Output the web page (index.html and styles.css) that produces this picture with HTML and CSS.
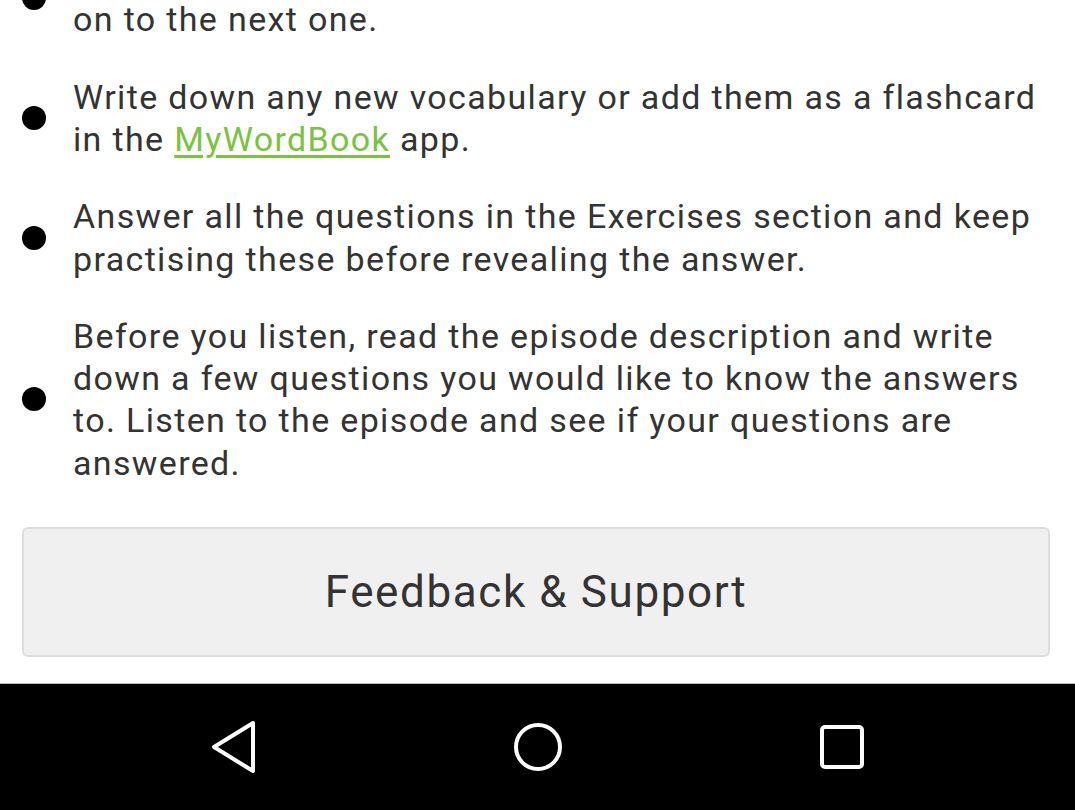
FILE: index.html
```html
<!DOCTYPE html>
<html lang="en">
<head>
<meta charset="utf-8">
<title>Tips</title>
<link rel="stylesheet" href="styles.css">
</head>
<body>
<div class="screen">
  <main class="content">
    <ul class="tips">
      <li class="tip"><span class="dot"></span><p>Listen to each episode three or four times before you move on to the next one.</p></li>
      <li class="tip"><span class="dot"></span><p>Write down any new vocabulary or add them as a flashcard in the <a class="link" href="#">MyWordBook</a> app.</p></li>
      <li class="tip"><span class="dot"></span><p>Answer all the questions in the Exercises section and keep practising these before revealing the answer.</p></li>
      <li class="tip"><span class="dot"></span><p>Before you listen, read the episode description and write down a few questions you would like to know the answers to. Listen to the episode and see if your questions are answered.</p></li>
    </ul>
    <button class="feedback">Feedback &amp; Support</button>
  </main>
  <nav class="navbar">
    <svg class="nav-icon" width="60" height="60" viewBox="0 0 60 60"><path d="M49 6 L10 30 L49 54 Z" fill="none" stroke="#fff" stroke-width="4" stroke-linejoin="round"/></svg>
    <svg class="nav-icon" width="60" height="60" viewBox="0 0 60 60"><circle cx="30" cy="30" r="22" fill="none" stroke="#fff" stroke-width="4"/></svg>
    <svg class="nav-icon" width="60" height="60" viewBox="0 0 60 60"><rect x="10" y="10" width="40" height="40" rx="3" fill="none" stroke="#fff" stroke-width="4"/></svg>
  </nav>
</div>
</body>
</html>
```
FILE: styles.css
```css
html, body {
  margin: 0;
  padding: 0;
  background: #fff;
}
body {
  font-family: Roboto, "Liberation Sans", sans-serif;
  color: #333;
}
.screen {
  height: 810px;
  display: flex;
  flex-direction: column;
  overflow: hidden;
}
.content {
  flex: 1;
  min-height: 0;
  overflow: hidden;
  display: flex;
  flex-direction: column;
  justify-content: flex-end;
  padding: 0 25px 26px 22px;
}
.tips {
  flex: none;
  list-style: none;
  margin: 0 0 43px 0;
  padding: 0;
  display: flex;
  flex-direction: column;
  gap: 35px;
}
.tip {
  display: flex;
  align-items: center;
  gap: 27px;
}
.dot {
  flex: none;
  width: 24px;
  height: 24px;
  border-radius: 50%;
  background: #000;
}
.tip p {
  margin: 0;
  font-size: 34px;
  line-height: 42.3px;
  letter-spacing: 1.35px;
}
.link {
  color: #7cc242;
  text-decoration: underline;
  text-underline-offset: 4px;
}
.feedback {
  flex: none;
  height: 130px;
  width: 100%;
  background: #f0f0f0;
  border: 2px solid #ddd;
  border-radius: 6px;
  font-family: Roboto, "Liberation Sans", sans-serif;
  font-size: 44px;
  letter-spacing: 1.6px;
  color: #333;
  padding: 0;
}
.navbar {
  flex: none;
  height: 126px;
  background: #000;
  border-top: 1px solid #bbb;
  display: flex;
  align-items: center;
  justify-content: center;
  gap: 244px;
}
.nav-icon {
  display: block;
}
```
